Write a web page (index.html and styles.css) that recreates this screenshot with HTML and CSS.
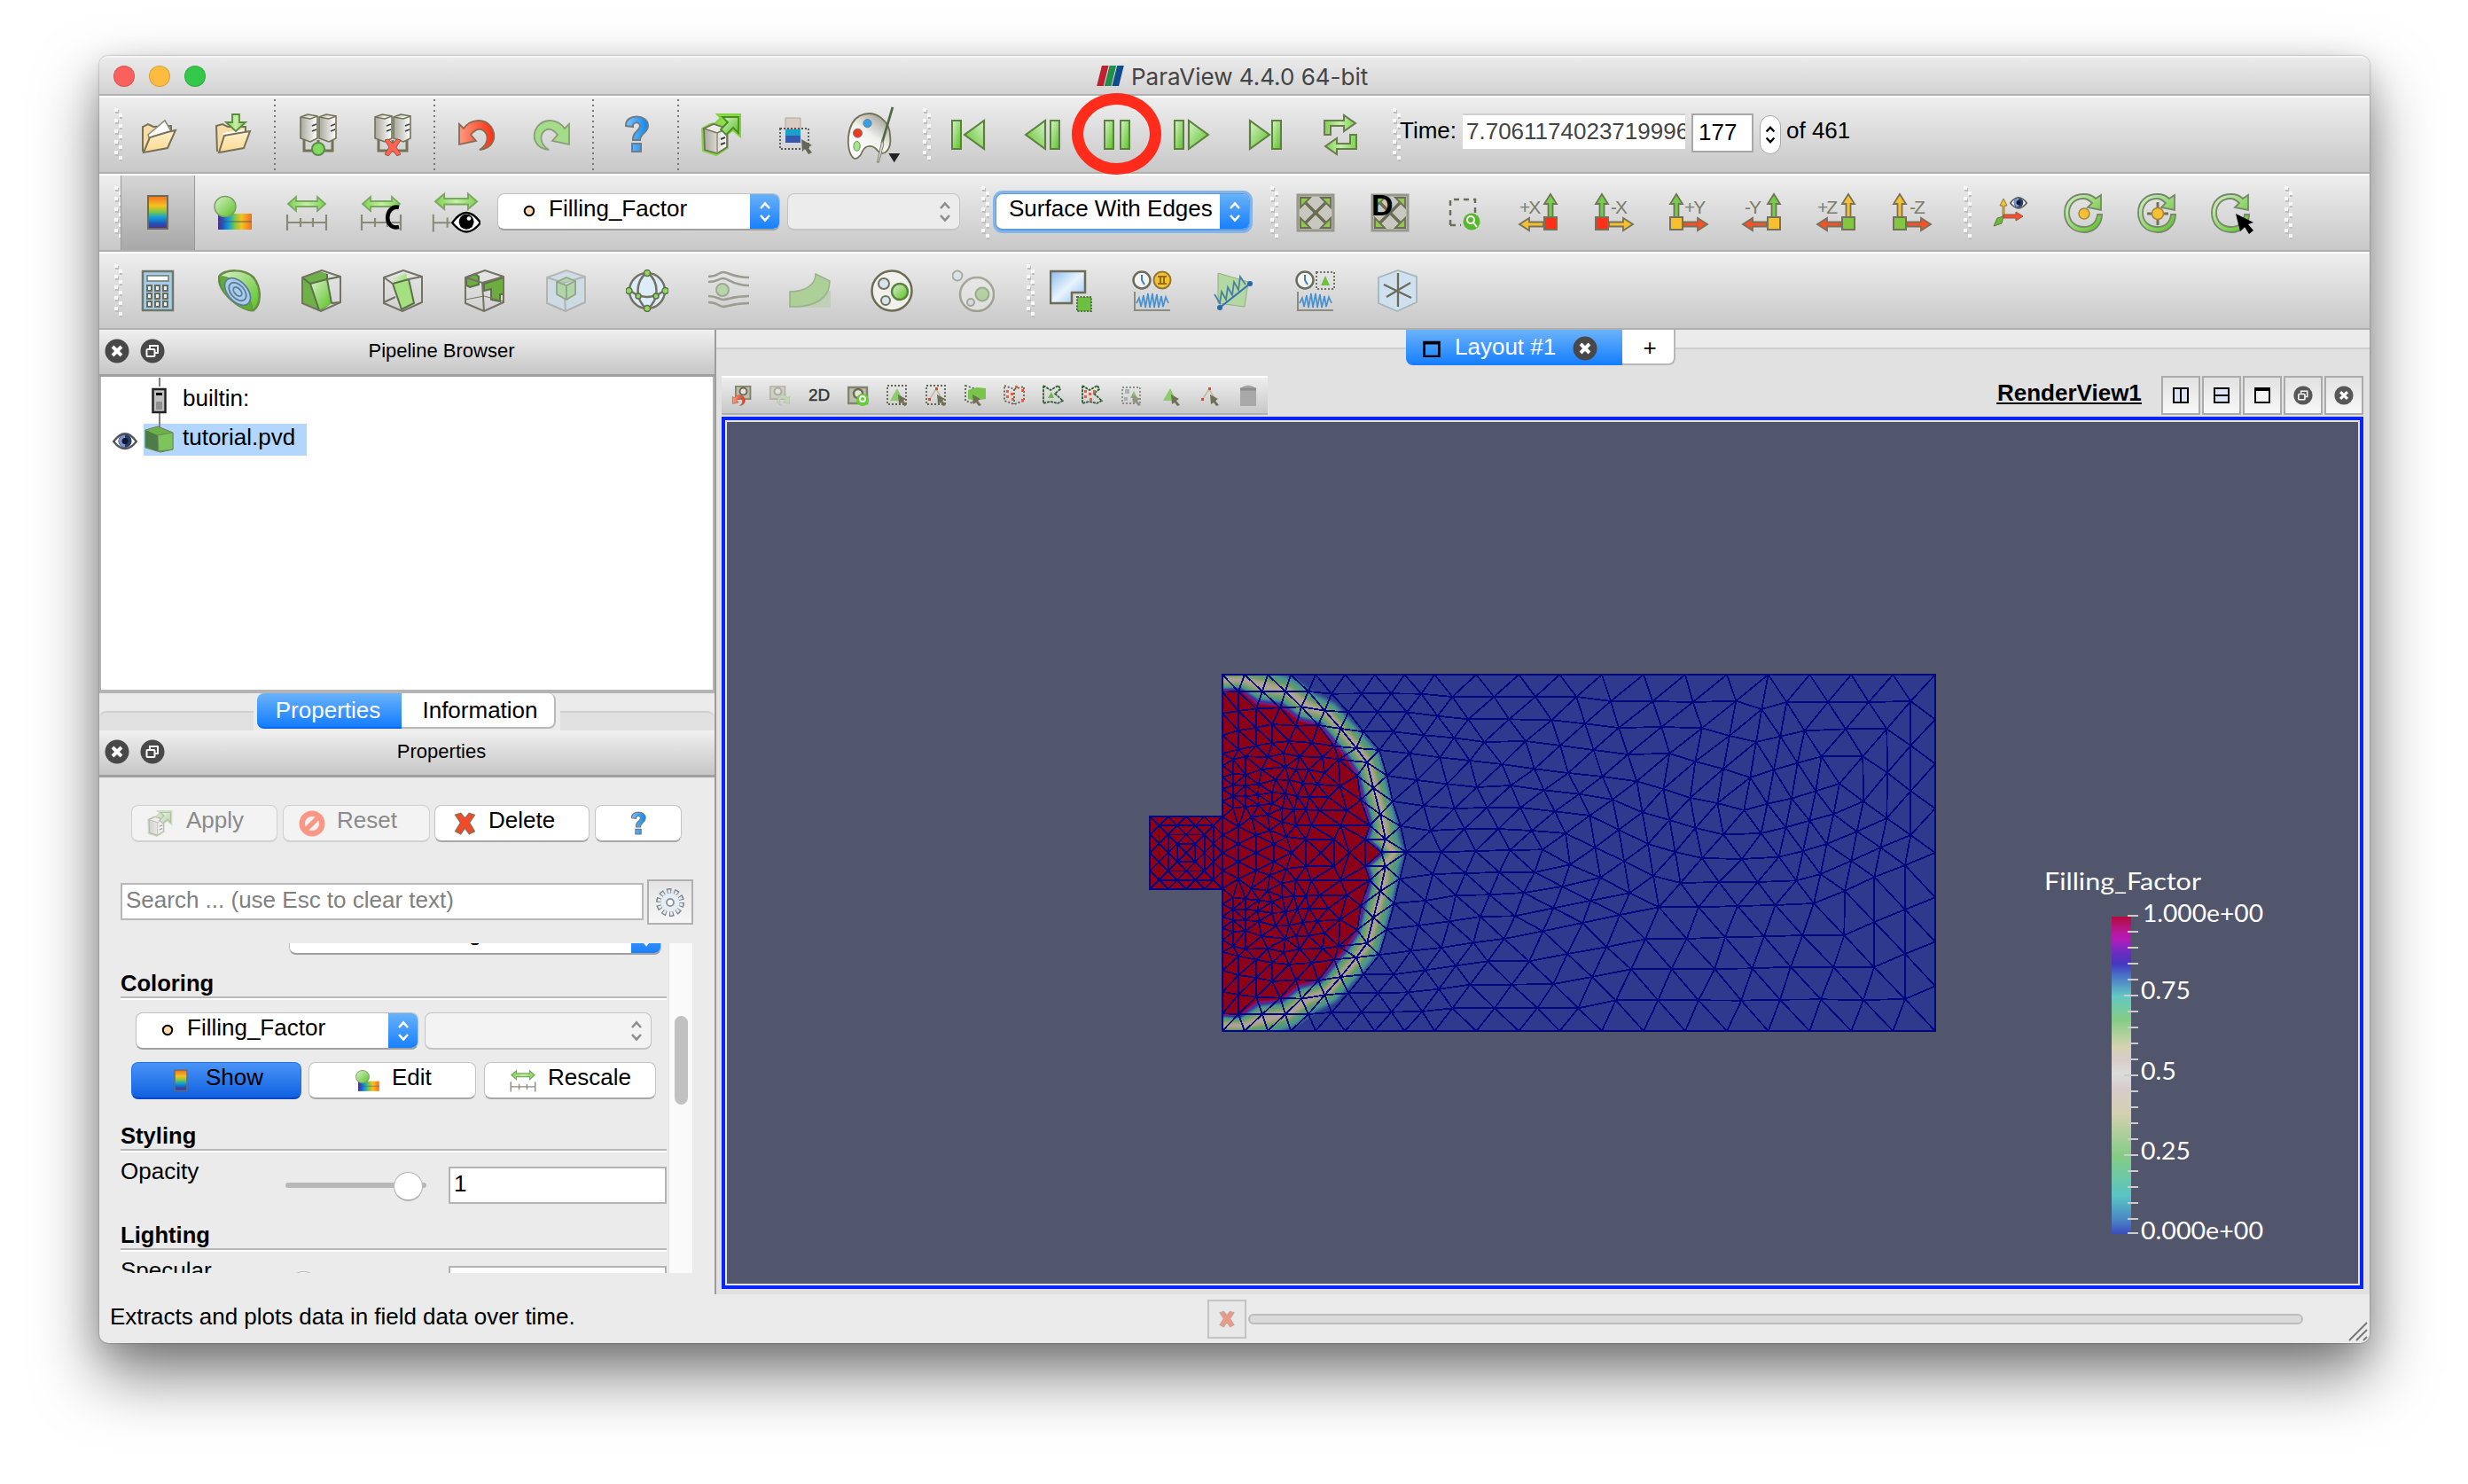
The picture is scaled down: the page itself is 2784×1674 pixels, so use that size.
FILE: index.html
```html
<!DOCTYPE html>
<html lang="en">
<head>
<meta charset="utf-8">
<title>ParaView 4.4.0 64-bit</title>
<link rel="stylesheet" href="styles.css">
</head>
<body>
<svg class="defs" width="0" height="0" aria-hidden="true">
  <defs>
    <linearGradient id="gG" x1="0" y1="0" x2="1" y2="1"><stop offset="0" stop-color="#d9f2cc"/><stop offset="1" stop-color="#58c020"/></linearGradient>
    <linearGradient id="gH" x1="0" y1="0" x2="1" y2="0"><stop offset="0" stop-color="#7cd24c"/><stop offset=".5" stop-color="#c4f0a8"/><stop offset="1" stop-color="#7cd24c"/></linearGradient>
    <linearGradient id="gY" x1="0" y1="0" x2="0" y2="1"><stop offset="0" stop-color="#fff0cc"/><stop offset="1" stop-color="#ffd890"/></linearGradient>
    <linearGradient id="gR" x1="0" y1="0" x2="1" y2="0"><stop offset="0" stop-color="#ff9a80"/><stop offset="1" stop-color="#ff2c10"/></linearGradient>
    <linearGradient id="gS" x1="0" y1="0" x2="1" y2="0"><stop offset="0" stop-color="#a8a89c"/><stop offset="1" stop-color="#fff"/></linearGradient>
    <linearGradient id="gP" x1="1" y1="0" x2=".4" y2=".9"><stop offset="0" stop-color="#8c8c80"/><stop offset=".6" stop-color="#f0f0ec"/><stop offset="1" stop-color="#fff"/></linearGradient>
    <linearGradient id="gB" x1="0" y1="0" x2="1" y2="1"><stop offset="0" stop-color="#8cbcf0"/><stop offset=".5" stop-color="#e8f4ff"/><stop offset="1" stop-color="#8cbcf0"/></linearGradient>
    <linearGradient id="gQ" x1="0" y1="0" x2="1" y2="0"><stop offset="0" stop-color="#7cc4ff"/><stop offset="1" stop-color="#0a88f0"/></linearGradient>
    <linearGradient id="rbV" x1="0" y1="0" x2="0" y2="1"><stop offset="0" stop-color="#f07020"/><stop offset=".3" stop-color="#f8c020"/><stop offset=".48" stop-color="#80c840"/><stop offset=".65" stop-color="#10a0d8"/><stop offset=".85" stop-color="#2050b8"/><stop offset="1" stop-color="#5a2890"/></linearGradient>
    <linearGradient id="rbH" x1="1" y1="0" x2="0" y2="0"><stop offset="0" stop-color="#f07020"/><stop offset=".3" stop-color="#f8c020"/><stop offset=".5" stop-color="#80c840"/><stop offset=".68" stop-color="#10a0d8"/><stop offset=".88" stop-color="#2050b8"/><stop offset="1" stop-color="#5a2890"/></linearGradient>
    <linearGradient id="legend" x1="0" y1="0" x2="0" y2="1">
      <stop offset="0" stop-color="#b40a3c"/><stop offset=".05" stop-color="#b8189c"/><stop offset=".075" stop-color="#b01cbc"/><stop offset=".115" stop-color="#6a2cc0"/><stop offset=".15" stop-color="#4438c0"/><stop offset=".185" stop-color="#4a70c8"/><stop offset=".25" stop-color="#62c8c4"/><stop offset=".325" stop-color="#84cc84"/><stop offset=".41" stop-color="#d4d4b0"/><stop offset=".45" stop-color="#d8ccc8"/><stop offset=".495" stop-color="#dcdcdc"/><stop offset=".54" stop-color="#d8cccc"/><stop offset=".62" stop-color="#d4d0b0"/><stop offset=".755" stop-color="#84cc84"/><stop offset=".88" stop-color="#58c4c4"/><stop offset=".95" stop-color="#4a8cc4"/><stop offset="1" stop-color="#3c4cc0"/>
    </linearGradient>

    <symbol id="open" viewBox="0 0 48 48"><path d="M6 43 6 15 12 12 18 15 38 14 38 24" fill="#f8dca8" stroke="#747258" stroke-width="2"/><path d="M12 24 31 8 38 20 26 32 14 30Z" fill="#fff" stroke="#8a8872" stroke-width="1.5"/><path d="M7 44 14 27 34 21 43 19 34 39Z" fill="url(#gY)" stroke="#747258" stroke-width="2"/></symbol>
    <symbol id="save" viewBox="0 0 48 48"><path d="M6 43 5 14 12 12 18 15 38 15 38 24" fill="#f8dca8" stroke="#747258" stroke-width="2"/><path d="M12 22 36 18 36 26 14 30Z" fill="#fff"/><path d="M8 44 14 25 43 20 36 39Z" fill="url(#gY)" stroke="#747258" stroke-width="2"/><path d="M23 1H31V10H38L27 20 16 10H23Z" fill="url(#gH)" stroke="#5c8a3c" stroke-width="1.8"/></symbol>
    <symbol id="servers" viewBox="0 0 48 48"><path d="M8 29V42H40V29M24 30V42" fill="none" stroke="#747258" stroke-width="3"/><g stroke="#747258" stroke-width="1.6"><path d="M4 4 12 1 23 3 23 28 15 32 4 28Z" fill="url(#gS)"/><path d="M25 4 33 1 44 3 44 28 36 32 25 28Z" fill="url(#gS)"/><path d="M4 4 15 6 23 3M25 4 36 6 44 3" fill="#f4f4f0"/><path d="M17 14 22 12M17 20 22 18M38 14 43 12M38 20 43 18" fill="none" stroke="#444"/></g></symbol>
    <symbol id="undo" viewBox="0 0 48 48"><path d="M4 12 9 17C16 7 31 4 40 15 47 26 43 39 27 41 37 35 38 24 31 19 26 16 21 19 17 24L23 31 4 35Z" fill="url(#gR)" stroke="#8a6a50" stroke-width="1.8"/></symbol>
    <symbol id="redo" viewBox="0 0 48 48"><path d="M44 12 39 17C32 7 17 4 8 15 1 26 5 39 21 41 11 35 10 24 17 19 22 16 27 19 31 24L25 31 44 35Z" fill="#a4dc88" stroke="#8c9c7c" stroke-width="1.8"/></symbol>
    <symbol id="help" viewBox="0 0 48 48"><path d="M12 14C11 0 37 0 37 14 37 22 28 22 28 30H20C19 20 28 20 28 14 28 9 19 9 20 15ZM19 34H29V43H19Z" fill="url(#gQ)" stroke="#6c7c88" stroke-width="2"/></symbol>
    <symbol id="box" viewBox="0 0 48 48"><path d="M3 17 12 12 18 11 24 5 20 1H46V26L38 19 32 23V39L19 47 4 42Z" fill="#8cdc4c" stroke="#80d43c" stroke-width="2"/><path d="M5 17 16 12 31 17V38L20 45 6 41Z" fill="url(#gS)" stroke="#747258" stroke-width="1.8"/><path d="M5 17 16 12 31 17 20 22Z" fill="#ececE6" stroke="#747258" stroke-width="1.5"/><path d="M20 22V45" fill="none" stroke="#a09080" stroke-width="1.6"/><path d="M24 29 29 27M24 35 29 33" stroke="#444" stroke-width="2"/><path d="M26 4H44V22L38 16 30 24 24 18 32 10Z" fill="url(#gG)" stroke="#4c8a28" stroke-width="1.8"/></symbol>
    <symbol id="selcolor" viewBox="0 0 48 48"><path d="M13 5H30V18H13Z" fill="#d8ccc4" stroke="#b0a8a0"/><path d="M13 18H30V33H13Z" fill="url(#rbV)"/><path d="M13 18H30V25H13Z" fill="#18a0c8"/><path d="M13 25H30V33H13Z" fill="#3858b0"/><path d="M7 17H39V40H7Z" fill="none" stroke="#555" stroke-width="1.8" stroke-dasharray="2 2"/><path d="M31 29 43 36 38 38 43 44 39 46 35 40 32 43Z" fill="#66665c"/></symbol>
    <symbol id="palette" viewBox="0 0 72 72"><path d="M12 64C3 54 4 22 20 13 40 3 58 20 58 38 60 54 50 64 43 56 37 48 28 48 24 56 22 62 16 68 12 64Z" fill="url(#gP)" stroke="#747258" stroke-width="2"/><circle cx="30" cy="22" r="5" fill="#30a0f0" stroke="#777"/><circle cx="18" cy="34" r="5.500" fill="#f03820" stroke="#777"/><ellipse cx="17" cy="50" rx="4" ry="6" fill="#a0e880" stroke="#777"/><path d="M61 2 48 46" stroke="#506a44" stroke-width="3"/><path d="M48 42 50 48 44 70 42 70Z" fill="#ddd" stroke="#747258"/><path d="M56 59H70L63 70Z" fill="#222"/></symbol>

    <g id="tri"><path d="M0 0V32L20 16Z" fill="url(#gG)" stroke="#5c8040" stroke-width="2"/></g>
    <g id="bar"><rect width="10" height="32" fill="url(#gG)" stroke="#5c8040" stroke-width="2"/></g>
    <symbol id="first" viewBox="0 0 48 48"><use href="#bar" x="6" y="8"/><use href="#tri" transform="matrix(-1.1 0 0 1 42 8)"/></symbol>
    <symbol id="prev" viewBox="0 0 48 48"><use href="#bar" x="33" y="8"/><use href="#tri" transform="matrix(-1.1 0 0 1 27 8)"/></symbol>
    <symbol id="pause" viewBox="0 0 48 48"><use href="#bar" x="10" y="8"/><use href="#bar" x="28" y="8"/></symbol>
    <symbol id="next" viewBox="0 0 48 48"><use href="#bar" x="5" y="8"/><use href="#tri" transform="matrix(1.1 0 0 1 21 8)"/></symbol>
    <symbol id="last" viewBox="0 0 48 48"><use href="#bar" x="31" y="8"/><use href="#tri" transform="matrix(1.1 0 0 1 6 8)"/></symbol>
    <symbol id="loop" viewBox="0 0 48 48"><path id="lp" d="M6 24V8H28V2L41 11 28 20V14H13V24Z" fill="url(#gH)" stroke="#6a7c50" stroke-width="2"/><use href="#lp" transform="rotate(180 24 24)"/></symbol>

    <symbol id="cbar" viewBox="0 0 48 48"><rect x="13" y="5" width="22" height="37" fill="url(#rbV)" stroke="#6c6c58" stroke-width="2"/></symbol>
    <symbol id="cedit" viewBox="0 0 48 48"><path d="M8 25H46V43H8Z" fill="url(#rbH)"/><path d="M8 34H46" stroke="#555" stroke-width="1.500" opacity=".6"/><ellipse cx="16" cy="17" rx="12" ry="11.500" fill="url(#gG)" stroke="#7c9c64" stroke-width="1.500"/></symbol>
    <g id="darrow"><path d="M2 9 11 1V6H35V1L44 9 35 17V12H11V17Z" fill="url(#gH)" stroke="#7aa860" stroke-width="1.800"/></g>
    <g id="rule"><path d="M1 0V18M45 0V18M1 9H45M16 4V14M30 4V14" stroke="#8a8a78" stroke-width="2.200" fill="none"/></g>
    <symbol id="rescale" viewBox="0 0 48 48"><use href="#darrow" x="1" y="5"/><use href="#rule" x="1" y="26"/></symbol>
    <symbol id="rescalec" viewBox="0 0 48 48"><use href="#darrow" x="1" y="5"/><use href="#rule" x="1" y="26"/><path d="M44 18C28 14 26 44 44 40" fill="none" stroke="#000" stroke-width="4.500"/></symbol>
    <symbol id="rescalev" viewBox="0 0 60 48"><use href="#darrow" transform="translate(3 0) scale(1.2 1.15)"/><path d="M3 26V47M3 36H24M20 30V42" stroke="#8a8a78" stroke-width="2.200" fill="none"/><path d="M26 36Q43 12 60 36 43 58 26 36Z" fill="#fff" stroke="#000" stroke-width="2.500"/><circle cx="43" cy="35" r="9" fill="#000"/><circle cx="46" cy="31" r="2.500" fill="#fff"/></symbol>
    <symbol id="fit" viewBox="0 0 48 48"><rect x="4" y="4" width="40" height="40" fill="#c8c8c0" stroke="#98988c" stroke-width="3"/><path d="M13 13 35 35M35 13 13 35" stroke="#6c6c54" stroke-width="3.500"/><path d="M7 7H18L7 18ZM41 7H30L41 18ZM7 41H18L7 30ZM41 41H30L41 30Z" fill="#90c850" stroke="#6c6c54" stroke-width="1.800"/></symbol>
    <symbol id="zoomsel" viewBox="0 0 48 48"><path d="M8 38V9H36V24M8 38H20" fill="none" stroke="#6c6c5c" stroke-width="2.500" stroke-dasharray="6 5"/><circle cx="32" cy="34" r="9.500" fill="#58b82c"/><circle cx="31" cy="32" r="4" fill="none" stroke="#fff" stroke-width="2"/><path d="M34 35 38 40" stroke="#fff" stroke-width="2"/></symbol>
    <path id="up" d="M-2.500 28V12H-7L0 1 7 12H2.500V28Z" stroke="#747258" stroke-width="1.800" fill="currentColor"/>
    <symbol id="rot" viewBox="0 0 52 48"><path d="M46 26C46 38 37 46 26 46 12 46 4 36 4 24 4 10 14 3 26 3 32 3 36 5 39 8L45 4V21L30 18 35 13C31 9 28 8 25 8 16 8 9 14 9 24 9 34 16 40 26 40 34 40 40 35 41 26Z" fill="url(#gG)" stroke="#78886a" stroke-width="1.800"/></symbol>
    <symbol id="eye" viewBox="0 0 48 48"><path d="M2 24Q24-6 46 24 24 52 2 24Z" fill="#fff" stroke="#555" stroke-width="4"/><circle cx="24" cy="23" r="13" fill="#28406c"/><path d="M24 11A12 12 0 0 0 24 35Z" fill="#7c98cc"/><circle cx="24" cy="23" r="6" fill="#101830"/></symbol>

    <symbol id="calc" viewBox="0 0 48 48"><rect x="7" y="2" width="34" height="44" fill="#a8ccec" stroke="#6c7868" stroke-width="2.500"/><rect x="12" y="7" width="24" height="6" fill="#fff" stroke="#6c7868" stroke-width="1.500"/><path d="M12 18h5v6h-5zM21 18h5v6h-5zM30 18h5v6h-5zM12 27h5v6h-5zM21 27h5v6h-5zM30 27h5v6h-5zM12 36h5v6h-5zM21 36h5v6h-5zM30 36h5v6h-5z" fill="#e8f0f4" stroke="#6c6c58" stroke-width="2"/></symbol>
    <symbol id="contour" viewBox="0 0 48 48"><path d="M1 8C8-1 30-1 40 9 50 22 48 40 40 46 28 48-1 26 1 8Z" fill="url(#gG)" stroke="#688c48" stroke-width="2.500"/><path d="M3 8C14 6 38 26 39 46 26 48-2 26 3 8Z" fill="#5cb030" stroke="#688c48"/><g fill="#a8ccec" stroke="#5c7c98" stroke-width="1.800"><ellipse cx="22" cy="25" rx="11" ry="18" transform="rotate(-42 22 25)"/><ellipse cx="22" cy="25" rx="7.500" ry="12" transform="rotate(-42 22 25)"/><ellipse cx="22" cy="25" rx="3.500" ry="6" transform="rotate(-42 22 25)"/></g></symbol>
    <path id="wire" d="M3 9 25 1 46 8V37L24 47 3 38ZM3 9 22 15 46 8M22 15 24 47" fill="none" stroke="#747264" stroke-width="2"/>
    <path id="hull" d="M3 9 25 1 46 8V37L24 47 3 38Z" fill="none" stroke="#747264" stroke-width="2"/>
    <symbol id="clip" viewBox="0 0 48 48"><path d="M3 9 22 2 32 5 31 11 36 38 24 47 3 38Z" fill="#70b048"/><path d="M12 16 31 12 36 38 22 45Z" fill="url(#gG)"/><path d="M3 9 12 16 22 46M12 16 31 11 36 38M31 11V5M31 11 46 8M36 38 46 37" fill="none" stroke="#5c7048" stroke-width="2"/><use href="#hull"/></symbol>
    <symbol id="slice" viewBox="0 0 48 48"><path d="M13 10 28 4 36 38 23 45Z" fill="url(#gG)"/><path d="M13 16 31 11 37 38 23 45Z" fill="#a4e080" stroke="#5c7048" stroke-width="2"/><path d="M3 9 13 16M31 11 46 8M3 37 16 31" stroke="#747264" stroke-width="2"/><use href="#hull"/></symbol>
    <symbol id="thresh" viewBox="0 0 48 48"><path d="M4 9 14 5 18 8V17L8 20 4 18ZM24 16 46 9V28H42V36L32 34V22L24 24Z" fill="#6cac40" stroke="#5c7048" stroke-width="2"/><use href="#wire"/><path d="M3 34 24 30 46 36" fill="none" stroke="#747264"/></symbol>
    <symbol id="subset" viewBox="0 0 48 48"><g opacity=".8"><path d="M3 9 25 1 46 8V37L24 47 3 38Z" fill="#ccdce8"/><g opacity=".45"><use href="#wire"/></g><path d="M14 14 25 9 35 13V28L25 34 14 28ZM14 14 25 18 35 13M25 18V34" fill="#a8d49c" stroke="#7c9870" stroke-width="1.800"/></g></symbol>
    <symbol id="glyph" viewBox="0 0 48 48"><circle cx="24" cy="24" r="20" fill="#dcecf8" stroke="#747264" stroke-width="2.500"/><path d="M24 3C10 14 10 34 24 45 38 34 38 14 24 3M5 24Q24 38 43 24" fill="none" stroke="#747264" stroke-width="2.500"/><g fill="#90d860" stroke="#5c7048" stroke-width="1.500"><circle cx="24" cy="4" r="3.500"/><circle cx="24" cy="44" r="3.500"/><circle cx="3.500" cy="24" r="3.500"/><circle cx="44.500" cy="24" r="3.500"/><circle cx="14" cy="30" r="3"/><circle cx="34" cy="30" r="3"/></g></symbol>
    <symbol id="stream" viewBox="0 0 48 48"><g fill="none" stroke="#9c9c90" stroke-width="2.500"><path d="M1 8C12 8 12 3 18 3S28 9 47 9"/><path d="M1 14C12 14 12 10 18 10S28 18 47 18"/><path d="M1 30C12 30 12 34 18 34S28 30 47 30"/><path d="M1 37C12 37 12 42 18 42S28 38 47 38"/></g><circle cx="17" cy="23" r="7" fill="#b8d4ac" stroke="#9cac90" stroke-width="2"/></symbol>
    <symbol id="warp" viewBox="0 0 48 48"><path d="M1 24H47V43H1Z" fill="#c0cfb8"/><path d="M1 25C20 25 30 16 30 5L46 13C46 32 30 43 1 42Z" fill="#acd098" stroke="#9cb08c" stroke-width="1.500"/></symbol>
    <symbol id="group" viewBox="0 0 48 48"><circle cx="24" cy="24" r="22.500" fill="#f0f0ec" stroke="#6c6c54" stroke-width="2.500"/><circle cx="15" cy="16" r="6" fill="#d4e4f0" stroke="#747258" stroke-width="2"/><circle cx="33" cy="25" r="9" fill="url(#gG)" stroke="#5c8040" stroke-width="2.500"/><circle cx="17" cy="35" r="5" fill="#d4e4f0" stroke="#747258" stroke-width="2"/></symbol>
    <symbol id="extract" viewBox="0 0 48 48"><g opacity=".5"><circle cx="28" cy="28" r="19" fill="#ececea" stroke="#6c6c54" stroke-width="2.500"/><circle cx="6" cy="7" r="5.500" fill="#d4e4f0" stroke="#747258" stroke-width="2"/><circle cx="34" cy="28" r="7.500" fill="#90c870" stroke="#5c8040" stroke-width="2"/><circle cx="21" cy="37" r="4" fill="#d4e4f0" stroke="#747258" stroke-width="2"/></g></symbol>
    <symbol id="blocks" viewBox="0 0 48 48"><path d="M1 2H40V26H25V38H1Z" fill="url(#gB)" stroke="#6c6c58" stroke-width="2.500"/><rect x="31" y="31" width="16" height="16" fill="#6cc040" stroke="#506c40" stroke-width="2" stroke-dasharray="2 1.500"/></symbol>
    <g id="clock"><circle cx="12" cy="12" r="9.500" fill="#f4f4f0" stroke="#6c6c5c" stroke-width="2.500"/><path d="M12 6V12L15 17" fill="none" stroke="#3880c8" stroke-width="2"/></g>
    <g id="wave"><path d="M4 25V46H44" fill="none" stroke="#8c8c80" stroke-width="2"/><path d="M6 38 9 32 11 42 14 29 16 43 19 27 21 43 24 27 26 43 29 28 31 43 34 30 36 42 39 31 42 38" fill="none" stroke="#4890d0" stroke-width="1.700"/></g>
    <symbol id="tplot" viewBox="0 0 48 48"><use href="#clock"/><circle cx="35" cy="12" r="9.500" fill="#f8c030" stroke="#8c7830" stroke-width="2"/><path d="M30 8H40M30 16H40M33 8V16M37 8V16" stroke="#8c7020" stroke-width="2"/><use href="#wave"/></symbol>
    <symbol id="lplot" viewBox="0 0 48 48"><path d="M6 4 40 14 36 42 6 38Z" fill="#b4d8a4" stroke="#90b080"/><path d="M2 28 8 38 10 25 15 34 17 20 22 29 24 14 29 23 31 8 37 17" fill="none" stroke="#4c80a0" stroke-width="1.800"/><path d="M8 43 42 16" stroke="#3070b0" stroke-width="2"/><circle cx="8" cy="43" r="3" fill="#2868b0"/><circle cx="42" cy="16" r="3" fill="#2868b0"/></symbol>
    <symbol id="splot" viewBox="0 0 48 48"><use href="#clock"/><rect x="25" y="3" width="20" height="19" fill="none" stroke="#747264" stroke-width="2" stroke-dasharray="2 2"/><path d="M35 7 40 18H30Z" fill="#70c040"/><use href="#wave"/></symbol>
    <symbol id="probe" viewBox="0 0 48 48"><path d="M3 9 25 1 46 8V37L24 47 3 38Z" fill="#cfe0ee" stroke="#a8b4bc" stroke-width="1.800"/><path d="M25 4V42M9 17 40 32M39 15 12 31" stroke="#6c6c5c" stroke-width="2.300"/></symbol>

    <symbol id="x" viewBox="0 0 28 28"><circle cx="14" cy="14" r="13.500" fill="#484848"/><path d="M9 9 19 19M19 9 9 19" stroke="#fff" stroke-width="4"/></symbol>
    <symbol id="float" viewBox="0 0 28 28"><circle cx="14" cy="14" r="13.500" fill="#484848"/><path d="M11 11V8H20V16H17" fill="none" stroke="#fff" stroke-width="2"/><rect x="7.500" y="12" width="9" height="8" rx="1" fill="none" stroke="#fff" stroke-width="2"/></symbol>
    <symbol id="redx" viewBox="0 0 28 28"><path d="M3 4 9 2 14 8 19 2 25 4 19 13 25 23 19 26 14 19 9 26 3 23 9 13Z" fill="#f84828" stroke="#a06850" stroke-width="1.800"/></symbol>
    <symbol id="ud" viewBox="0 0 16 24"><path d="M3 8 8 2.500 13 8M3 16 8 21.500 13 16" fill="none" stroke="currentColor" stroke-width="2.600"/></symbol>
    <symbol id="pt" viewBox="0 0 16 16"><circle cx="8" cy="8" r="5.200" fill="#ffd8ac" stroke="#000" stroke-width="2"/></symbol>
    <symbol id="cam" viewBox="0 0 24 24"><path d="M1 3H22V21H1Z" fill="#bcbcb0" stroke="#84846c" stroke-width="2.500"/><circle cx="12" cy="10" r="5" fill="#e4e4dc" stroke="#6c6c54" stroke-width="2.500"/></symbol>
    <symbol id="cur" viewBox="0 0 24 24"><path d="M13 11 22 16 19 18 23 23 20 24 17 20 14 22Z" fill="#707054"/></symbol>
    <symbol id="tric" viewBox="0 0 24 24"><path d="M12 4 19 18H4Z" fill="#8ccc6c"/></symbol>
    <symbol id="trip" viewBox="0 0 24 24"><path d="M12 5 19 17M12 5 4 17" stroke="#c4b8a0" stroke-width="1.500"/><path d="M11 3h3v3h-3zM3 15h3v3h-3zM17 15h3v3h-3z" fill="#f84020"/></symbol>
  </defs>
</svg>

<div class="window">
  <header class="titlebar">
    <div class="lights"><i class="light red"></i><i class="light amber"></i><i class="light green"></i></div>
    <svg class="logo" viewBox="0 0 32 24"><path d="M6 0H14L8 24H0Z" fill="#c02030"/><path d="M15 0H23L17 24H9Z" fill="#209048"/><path d="M24 0H32L26 24H18Z" fill="#104c90"/></svg>
    <span>ParaView 4.4.0 64-bit</span>
  </header>

  <div class="toolbar main">
    <i class="grip"></i>
    <button class="tool"><svg><use href="#open"/></svg></button>
    <button class="tool"><svg><use href="#save"/></svg></button>
    <i class="sep"></i>
    <button class="tool"><svg viewBox="0 0 48 48"><use href="#servers"/><circle cx="24" cy="40" r="7" fill="#80dc60" stroke="#5c8a48" stroke-width="2"/></svg></button>
    <button class="tool"><svg viewBox="0 0 48 48"><use href="#servers"/><path d="M15 30 19 29 24 34 29 29 33 30 28 38 33 46 29 48 24 42 19 48 15 46 20 38Z" fill="#ff6450" stroke="#a05040"/></svg></button>
    <i class="sep"></i>
    <button class="tool"><svg><use href="#undo"/></svg></button>
    <button class="tool"><svg><use href="#redo"/></svg></button>
    <i class="sep"></i>
    <button class="tool"><svg><use href="#help"/></svg></button>
    <i class="sep"></i>
    <button class="tool"><svg><use href="#box"/></svg></button>
    <button class="tool"><svg><use href="#selcolor"/></svg></button>
    <button class="tool"><svg class="big"><use href="#palette"/></svg></button>
    <i class="grip vcr-grip"></i>
    <button class="tool"><svg><use href="#first"/></svg></button>
    <button class="tool"><svg><use href="#prev"/></svg></button>
    <button class="tool marked"><svg><use href="#pause"/></svg><i class="ring"></i></button>
    <button class="tool"><svg><use href="#next"/></svg></button>
    <button class="tool"><svg><use href="#last"/></svg></button>
    <button class="tool"><svg><use href="#loop"/></svg></button>
    <i class="grip time-grip"></i>
    <label class="time-label">Time:</label>
    <div class="time-value">7.7061174023719996</div>
    <div class="time-step">177</div>
    <div class="stepper"><svg><use href="#ud"/></svg></div>
    <span class="time-total">of 461</span>
  </div>

  <div class="toolbar color">
    <i class="grip"></i>
    <button class="tool pressed"><svg><use href="#cbar"/></svg></button>
    <button class="tool"><svg><use href="#cedit"/></svg></button>
    <button class="tool"><svg><use href="#rescale"/></svg></button>
    <button class="tool"><svg><use href="#rescalec"/></svg></button>
    <button class="tool"><svg class="wide"><use href="#rescalev"/></svg></button>
    <div class="combo array"><svg class="pt"><use href="#pt"/></svg><span>Filling_Factor</span><i class="cap"><svg><use href="#ud"/></svg></i></div>
    <div class="combo off component"><i class="cap"><svg><use href="#ud"/></svg></i></div>
    <i class="grip rep-grip"></i>
    <div class="combo focus rep"><span>Surface With Edges</span><i class="cap"><svg><use href="#ud"/></svg></i></div>
    <i class="grip cam-grip"></i>
    <button class="tool"><svg><use href="#fit"/></svg></button>
    <button class="tool"><svg viewBox="0 0 48 48"><use href="#fit"/><text x="3" y="27" class="glyph-d">D</text></svg></button>
    <button class="tool"><svg><use href="#zoomsel"/></svg></button>
    <button class="tool"><svg viewBox="0 0 48 48" class="axis"><text x="2" y="25">+X</text><use href="#up" x="37" y="2" color="#70d048"/><use href="#up" transform="translate(1 37) rotate(-90)" color="#f8c030"/><rect x="30" y="29" width="14" height="14" fill="#ff3018"/></svg></button>
    <button class="tool"><svg viewBox="0 0 48 48" class="axis"><text x="21" y="25">-X</text><use href="#up" x="11" y="2" color="#70d048"/><use href="#up" transform="translate(47 37) rotate(90)" color="#f8c030"/><rect x="4" y="29" width="14" height="14" fill="#ff3018"/></svg></button>
    <button class="tool"><svg viewBox="0 0 48 48" class="axis"><text x="20" y="25">+Y</text><use href="#up" x="11" y="2" color="#70d048"/><use href="#up" transform="translate(47 37) rotate(90)" color="#f85028"/><rect x="4" y="29" width="14" height="14" fill="#f8c030"/></svg></button>
    <button class="tool"><svg viewBox="0 0 48 48" class="axis"><text x="4" y="25">-Y</text><use href="#up" x="37" y="2" color="#70d048"/><use href="#up" transform="translate(1 37) rotate(-90)" color="#f85028"/><rect x="30" y="29" width="14" height="14" fill="#f8c030"/></svg></button>
    <button class="tool"><svg viewBox="0 0 48 48" class="axis"><text x="2" y="25">+Z</text><use href="#up" x="37" y="2" color="#f8c030"/><use href="#up" transform="translate(1 37) rotate(-90)" color="#f85028"/><rect x="30" y="29" width="14" height="14" fill="#80c840"/></svg></button>
    <button class="tool"><svg viewBox="0 0 48 48" class="axis"><text x="22" y="25">-Z</text><use href="#up" x="11" y="2" color="#f8c030"/><use href="#up" transform="translate(47 37) rotate(90)" color="#f85028"/><rect x="4" y="29" width="14" height="14" fill="#80c840"/></svg></button>
    <i class="grip axes-grip"></i>
    <button class="tool slim"><svg viewBox="0 0 48 48"><path d="M15 28V16H12L16 8 20 16H17V28Z" fill="#f8c030" stroke="#8a7840"/><path d="M16 26H30V23L38 28 30 33V30H16Z" fill="#f85028" stroke="#8a5840"/><path d="M16 28 9 30 5 39 14 36Z" fill="#6cb83c" stroke="#5c7c40"/><use href="#eye" x="23" y="3" width="20" height="20"/></svg></button>
    <button class="tool slim"><svg viewBox="0 0 52 48" class="wide"><use href="#rot"/><circle cx="26" cy="25" r="6" fill="#f8c030" stroke="#a08840" stroke-width="1.500"/></svg></button>
    <button class="tool slim"><svg viewBox="0 0 52 48" class="wide"><use href="#rot"/><path d="M26 12V38M14 25H38" stroke="#747258" stroke-width="3"/><circle cx="26" cy="25" r="6.500" fill="#f8c030" stroke="#a08840" stroke-width="1.500"/></svg></button>
    <button class="tool slim"><svg viewBox="0 0 52 48" class="wide"><use href="#rot"/><path d="M31 25 51 35 45 37 51 44 46 48 41 40 36 45Z" fill="#000"/></svg></button>
    <i class="grip end-grip"></i>
  </div>

  <div class="toolbar filters">
    <i class="grip"></i>
    <button class="tool"><svg><use href="#calc"/></svg></button>
    <button class="tool"><svg><use href="#contour"/></svg></button>
    <button class="tool"><svg><use href="#clip"/></svg></button>
    <button class="tool"><svg><use href="#slice"/></svg></button>
    <button class="tool"><svg><use href="#thresh"/></svg></button>
    <button class="tool"><svg><use href="#subset"/></svg></button>
    <button class="tool"><svg><use href="#glyph"/></svg></button>
    <button class="tool"><svg><use href="#stream"/></svg></button>
    <button class="tool"><svg><use href="#warp"/></svg></button>
    <button class="tool"><svg><use href="#group"/></svg></button>
    <button class="tool"><svg><use href="#extract"/></svg></button>
    <i class="grip plot-grip"></i>
    <button class="tool"><svg><use href="#blocks"/></svg></button>
    <button class="tool"><svg><use href="#tplot"/></svg></button>
    <button class="tool"><svg><use href="#lplot"/></svg></button>
    <button class="tool"><svg><use href="#splot"/></svg></button>
    <button class="tool"><svg><use href="#probe"/></svg></button>
  </div>

  <div class="body">
    <aside class="docks">
      <div class="dock-title"><svg><use href="#x"/></svg><svg><use href="#float"/></svg><span>Pipeline Browser</span></div>
      <div class="tree">
        <div class="tree-row"><svg class="server" viewBox="0 0 24 44"><path d="M12 0V10M12 44V40" stroke="#808080" stroke-width="2"/><rect x="4.500" y="13" width="14" height="26" fill="#c0c0c0" stroke="#222" stroke-width="2.500"/><path d="M8 17H15V20H8Z" fill="#000"/><path d="M8 27H15V36H8Z" fill="#909090"/></svg><span>builtin:</span></div>
        <div class="tree-row second"><svg class="eye"><use href="#eye"/></svg><div class="selected"><svg viewBox="0 0 34 36"><path d="M18-8V4" stroke="#808080" stroke-width="2"/><path d="M2 7 16 3 33 10V29L19 32 2 27Z" fill="#6cb04c" stroke="#6c7c54"/><path d="M2 7 16 13V31L2 26Z" fill="#4c7c48"/><path d="M16 13 33 10V29L17 31Z" fill="#7cc45c" stroke="#6c8c54"/></svg><span>tutorial.pvd</span></div></div>
      </div>
      <div class="dock-tabs"><i class="frame"></i><div class="tabs"><span class="tab on">Properties</span><span class="tab">Information</span></div><i class="frame right"></i></div>
      <div class="dock-title"><svg><use href="#x"/></svg><svg><use href="#float"/></svg><span>Properties</span></div>

      <div class="actions">
        <button class="push off apply"><svg><use href="#box"/></svg>Apply</button>
        <button class="push off reset"><svg viewBox="0 0 28 28"><circle cx="14" cy="14" r="10.500" fill="none" stroke="#ff3c1c" stroke-width="6"/><path d="M21 7 7 21" stroke="#ff3c1c" stroke-width="5"/></svg>Reset</button>
        <button class="push delete"><svg><use href="#redx"/></svg>Delete</button>
        <button class="push about"><svg><use href="#help"/></svg></button>
      </div>
      <div class="search-row">
        <div class="search">Search ... (use Esc to clear text)</div>
        <button class="gear"><svg viewBox="0 0 34 34"><circle cx="17" cy="17" r="13" fill="none" stroke="#7c848c" stroke-width="6" stroke-dasharray="5 3.170"/><circle cx="17" cy="17" r="12.500" fill="none" stroke="#e4ecf4" stroke-width="4" stroke-dasharray="2.800 5.054" stroke-dashoffset="-1"/><circle cx="17" cy="17" r="10.500" fill="#e4ecf4" /><circle cx="17" cy="17" r="4" fill="#fff" stroke="#8c949c" stroke-width="1.800"/></svg></button>
      </div>
      <div class="scroll">
        <div class="props">
          <div class="combo rep2"><span>Surface With Edges</span><i class="cap"><svg><use href="#ud"/></svg></i></div>
          <h3 class="first">Coloring</h3>
          <div class="row combos"><div class="combo array"><svg class="pt"><use href="#pt"/></svg><span>Filling_Factor</span><i class="cap"><svg><use href="#ud"/></svg></i></div><div class="combo off component"><i class="cap"><svg><use href="#ud"/></svg></i></div></div>
          <div class="row color-buttons">
            <button class="push primary show"><svg><use href="#cbar"/></svg>Show</button>
            <button class="push edit"><svg><use href="#cedit"/></svg>Edit</button>
            <button class="push rescale"><svg><use href="#rescale"/></svg>Rescale</button>
          </div>
          <h3 class="styling">Styling</h3>
          <div class="field"><label>Opacity</label><div class="slider full"><i></i></div><div class="input">1</div></div>
          <h3 class="lighting">Lighting</h3>
          <div class="field"><label>Specular</label><div class="slider zero"><i></i></div><div class="input">0</div></div>
        </div>
        <div class="scrollbar"><i></i></div>
      </div>
    </aside>

    <main class="views">
      <div class="layout-tabs"><div class="tabs"><span class="tab on"><svg class="win" viewBox="0 0 18 18"><path d="M1 2H17V17H1ZM1 3H17" fill="none" stroke="#000" stroke-width="2.500"/></svg>Layout #1<svg class="close"><use href="#x"/></svg></span><span class="tab plus">+</span></div></div>
      <div class="view-head">
        <div class="view-tools">
          <svg viewBox="0 0 24 24"><use href="#cam" x="5" y="-1" width="19" height="20"/><use href="#undo" y="9" width="19" height="17"/></svg>
          <svg viewBox="0 0 24 24" class="dim"><use href="#cam" y="-1" width="19" height="20"/><use href="#redo" x="6" y="9" width="19" height="17"/></svg>
          <span>2D</span>
          <svg viewBox="0 0 24 24"><use href="#cam"/><circle cx="17" cy="17" r="7" fill="#64cc34"/><circle cx="17" cy="16" r="3" fill="none" stroke="#fff" stroke-width="1.800"/></svg>
          <svg viewBox="0 0 24 24"><rect x="1" y="1" width="21" height="21" class="dash"/><use href="#tric"/><use href="#cur"/></svg>
          <svg viewBox="0 0 24 24"><rect x="1" y="1" width="21" height="21" class="dash"/><use href="#trip"/><use href="#cur"/></svg>
          <svg viewBox="0 0 24 24"><path d="M1 1 10 4V21L1 18Z" class="dash"/><path d="M4 6 14 3 24 4V16L12 18 4 16Z" fill="#78c44c"/><use href="#cur" x="-4"/></svg>
          <svg viewBox="0 0 24 24"><path d="M1 1 12 5 23 2V18L12 22 1 18ZM12 5V22" class="dash"/><path d="M3 6h3v3H3zM8 9h3v3H8zM3 12h3v3H3zM9 15h3v3H9zM13 1h3v3h-3zM20 16h3v3h-3zM20 5h3v3h-3z" fill="#f85838"/></svg>
          <svg viewBox="0 0 24 24"><path d="M1 1 9 6 18 1 20 5 14 10 23 18 17 21 9 19 1 21Z" class="poly"/><path d="M10 8 13 15H6Z" fill="#68b84c"/></svg>
          <svg viewBox="0 0 24 24"><path d="M1 1 9 6 18 1 20 5 14 10 23 18 17 21 9 19 1 21Z" class="poly"/><path d="M3 6h3v3H3zM8 9h3v3H8zM3 12h3v3H3zM9 15h3v3H9zM13 6h3v3h-3z" fill="#f85838"/></svg>
          <svg viewBox="0 0 24 24" class="faint"><rect x="2" y="3" width="20" height="18" class="dash"/><path d="M5 5H10V10H5ZM4 14H8V18H4Z" fill="#8c9ca4"/><path d="M15 7 19 15H11Z" fill="#64b040"/><use href="#cur"/></svg>
          <svg viewBox="0 0 24 24"><use href="#tric"/><use href="#cur"/></svg>
          <svg viewBox="0 0 24 24"><use href="#trip"/><use href="#cur"/></svg>
          <svg viewBox="0 0 24 24"><path d="M3 4Q12-3 21 4V24H3Z" fill="#a8a8a8"/><path d="M3 5H21" stroke="#8c8c8c" stroke-width="3"/></svg>
        </div>
        <div class="view-right">
          <span class="view-name">RenderView1</span>
          <button><svg viewBox="0 0 18 18"><path d="M1 1H17V17H1ZM9 1V17" fill="#dce4f8" stroke="#000" stroke-width="2"/></svg></button>
          <button><svg viewBox="0 0 18 18"><path d="M1 1H17V17H1ZM1 9H17" fill="#dce4f8" stroke="#000" stroke-width="2"/></svg></button>
          <button><svg viewBox="0 0 18 18"><path d="M1 1H17V17H1Z" fill="#f4f4f4" stroke="#000" stroke-width="2"/><path d="M0 0H18V4H0Z"/></svg></button>
          <button><svg class="round"><use href="#float"/></svg></button>
          <button><svg class="round"><use href="#x"/></svg></button>
        </div>
      </div>
      <div class="viewport">
        <svg viewBox="0 0 1840 972" class="scene">
          <g id="mesh" transform="translate(450 264) scale(.333333)"></g>
          <g id="ticks" class="ticks"><rect x="1562" y="558" width="22" height="358" fill="url(#legend)"/></g>
          <g class="legend">
            <text x="1486" y="528" textLength="177" lengthAdjust="spacingAndGlyphs">Filling_Factor</text>
            <text x="1597" y="564" textLength="136" lengthAdjust="spacingAndGlyphs">1.000e+00</text>
            <text x="1595" y="651" textLength="56" lengthAdjust="spacingAndGlyphs">0.75</text>
            <text x="1595" y="742" textLength="40" lengthAdjust="spacingAndGlyphs">0.5</text>
            <text x="1595" y="832" textLength="56" lengthAdjust="spacingAndGlyphs">0.25</text>
            <text x="1595" y="922" textLength="138" lengthAdjust="spacingAndGlyphs">0.000e+00</text>
          </g>
        </svg>
      </div>
    </main>
  </div>

  <footer class="status">
    <span>Extracts and plots data in field data over time.</span>
    <button class="cancel"><svg><use href="#redx"/></svg></button>
    <div class="progress"></div>
    <svg class="resize" viewBox="0 0 22 22"><path d="M1 21 21 1M9 21 21 9M17 21 21 17" stroke="#777" stroke-width="2"/></svg>
  </footer>
</div>
<script src="mesh.js"></script>
</body>
</html>
```
FILE: styles.css
```css
* { box-sizing: border-box; }
body { margin: 0; padding: 63px 0 0 112px; width: 2784px; height: 1674px; overflow: hidden; background: #fff; font: 26px/30px "Liberation Sans", Arial, sans-serif; color: #000; }
button { font: inherit; color: inherit; margin: 0; padding: 0; border: 0; background: none; }
svg { display: block; flex: none; }
i { display: block; flex: none; font-style: normal; }
.defs { position: absolute; }
.window { width: 2561px; height: 1452px; border-radius: 10px; background: #ebebeb; display: flex; flex-direction: column; box-shadow: 0 0 2px rgba(0,0,0,.45), 0 36px 72px rgba(0,0,0,.5), 0 10px 34px rgba(0,0,0,.14); }

.titlebar { height: 45px; flex: none; display: flex; align-items: center; border-radius: 10px 10px 0 0; border-top: 2px solid #f6f6f6; border-bottom: 2px solid #b0b0b0; background: linear-gradient(#ebebeb, #d3d3d3); color: #444; font: 26px/30px Inter, sans-serif; }
.titlebar span { padding-top: 2px; }
.lights { display: flex; gap: 16px; margin-left: 16px; width: 1109px; }
.light { width: 24px; height: 24px; border-radius: 50%; border: 1px solid rgba(0,0,0,.15); }
.red { background: #fc605c; }
.amber { background: #fdbc40; }
.green { background: #34c84a; }
.logo { width: 31px; height: 23px; margin-right: 8px; }

.toolbar { height: 88px; flex: none; display: flex; align-items: center; border-top: 2px solid #fff; border-bottom: 2px solid #b0b0b0; background: linear-gradient(#eee, #c8c8c8); }
.grip { width: 9px; height: 60px; margin-left: 17px; background: conic-gradient(from 0deg at 4px 4px, transparent 270deg, #f8f8f8 0) 0 0/10px 12px, conic-gradient(from 0deg at 4px 4px, transparent 270deg, #bebebe 0) 1px 2px/10px 12px, conic-gradient(from 0deg at 4px 4px, transparent 270deg, #f8f8f8 0) 5px 6px/10px 12px, conic-gradient(from 0deg at 4px 4px, transparent 270deg, #bebebe 0) 6px 8px/10px 12px; }
.main > .grip:first-child { margin-right: -1px; }
.color > .grip:first-child { margin-right: -2px; }
.filters > .grip:first-child { margin-right: -6px; }
.tool { width: 84px; height: 84px; flex: none; display: flex; align-items: center; justify-content: center; }
.tool svg { width: 48px; height: 48px; }
.tool svg.big { width: 66px; height: 66px; margin-left: 6px; }
.tool svg.wide { width: 56px; height: 48px; }
.tool.slim { width: 83px; }
.filters .tool { width: 92px; }
.pressed { background: linear-gradient(#d6d6d6, #a8a8a8); border: solid #999; border-width: 0 1px; }
.sep { width: 11.5px; height: 80px; background: repeating-linear-gradient(#777 0 2px, transparent 2px 6px) 4px 0/2px 100% no-repeat; }
.vcr-grip { margin-left: 18px; }
.time-grip { margin-left: 17px; margin-right: -1px; }
.marked { position: relative; }
.ring { position: absolute; left: -9px; top: -5px; width: 101px; height: 92px; border: 13px solid #ff2c1c; border-radius: 50%; }
.time-label { width: 69px; margin-top: -10px; flex: none; }
.time-value { width: 251px; height: 40px; flex: none; margin: -8px 0 0 2px; padding-left: 4px; line-height: 36px; overflow: hidden; background: #fff; border-top: 2px solid #d0d0d0; color: #444; }
.time-step { width: 70px; height: 44px; flex: none; margin: -4px 7px 0 7px; padding-left: 6px; line-height: 38px; background: #fff; border: 2px solid #a8a8a8; }
.stepper { width: 24px; height: 44px; flex: none; border-radius: 12px; background: #fff; border: 1px solid #a8a8a8; display: flex; align-items: center; justify-content: center; margin-right: 6px; }
.stepper svg { width: 14px; height: 26px; }
.time-total { margin-top: -10px; }

.combo { height: 42px; flex: none; display: flex; background: #fff; border: 1px solid #c0c0c0; border-bottom: 2px solid #a0a0a0; border-radius: 8px; overflow: hidden; margin-top: -2px; }
.combo span { line-height: 33px; flex: 1; white-space: nowrap; }
.combo .cap { width: 34px; margin: -1px -1px -2px auto; background: linear-gradient(#6ab3f9, #147dff); color: #fff; display: flex; align-items: center; justify-content: center; }
.combo .cap svg { width: 18px; height: 24px; }
.combo .pt { width: 16px; height: 16px; margin: 11px 14px 0 27px; }
.combo.off { background: #ececec; border-color: #c4c4c4; }
.combo.off .cap { background: none; color: #8c8c8c; }
.combo.array { width: 319px; }
.color .array { margin-left: 5px; }
.color .component { width: 195px; margin-left: 8px; }
.rep-grip { margin-left: 24px; }
.rep { width: 287px; margin-left: 7px; padding-left: 14px; }
.focus { border-color: #5c9ce0; box-shadow: 0 0 0 3px #84b4e8; }
.cam-grip { margin-left: 23px; }
.axes-grip { margin-right: 2px; }
.end-grip { margin-left: 19px; }
.plot-grip { margin-left: 14px; margin-right: -5px; }
.glyph-d { font: bold 34px "Liberation Sans", sans-serif; }
.axis text { font: 21px "Liberation Sans", sans-serif; letter-spacing: -2px; fill: #7c7c68; }
.axis rect { stroke: #747258; stroke-width: 2; }

.body { height: 1088px; flex: none; display: flex; }
.docks { width: 696px; border-right: 2px solid #9c9c9c; display: flex; flex-direction: column; }
.dock-title { height: 53px; flex: none; display: flex; align-items: center; padding: 0 0 2px 6px; gap: 12px; border-bottom: 3px solid #a0a0a0; background: linear-gradient(#f0f0f0, #c6c6c6); font-size: 22px; }
.dock-title svg { width: 28px; height: 28px; }
.dock-title span { flex: 1; text-align: center; margin-right: 8px; }
.tree { height: 357px; flex: none; background: #fff; border: solid #b4b4b4; border-width: 0 2px 4px; padding-top: 1px; }
.tree-row { height: 44px; display: flex; align-items: center; }
.tree-row .server { width: 24px; height: 44px; margin: 0 14px 0 54px; }
.tree-row span { padding-top: 2px; }
.second { height: 52px; }
.second .eye { width: 28px; height: 28px; margin: 4px 7px 0 13px; }
.selected { width: 184px; height: 36px; display: flex; background: #b2d6fe; }
.selected svg { width: 34px; height: 36px; overflow: visible; margin-right: 10px; }
.selected span { padding-top: 0; }
.tabs { display: flex; }
.tab { background: #fff; }
.tab.on { background: linear-gradient(#6ab3f9, #147dff); color: #fff; }
.dock-tabs { height: 42px; flex: none; display: flex; align-items: flex-end; }
.dock-tabs .frame { width: 174px; height: 22px; background: #e1e1e1; border-top: 2px solid #d0d0d0; border-top-left-radius: 8px; }
.dock-tabs .right { border-radius: 0 8px 0 0; }
.dock-tabs .tabs { margin: 0 5px 2px 4px; height: 40px; }
.dock-tabs .tab { width: 163px; padding-right: 3px; line-height: 38px; text-align: center; border-radius: 8px 0 0 8px; border-bottom: 2px solid #0a64f0; }
.dock-tabs .tab + .tab { width: 174px; padding: 0 0 0 5px; border-radius: 0 8px 8px 0; border: solid #b8b8b8; border-width: 0 2px 2px 0; }

.push { height: 42px; flex: none; display: flex; align-items: center; padding: 0 0 8px 16px; background: #fff; border: 1px solid #c4c4c4; border-bottom: 2px solid #a8a8a8; border-radius: 8px; line-height: 30px; }
.push svg { width: 30px; height: 30px; margin: 8px 15px 0 0; }
.push.off { background: #f3f3f3; color: #8a8a8a; border-color: #d0d0d0; }
.push.off svg { opacity: .5; }
.push.primary { background: linear-gradient(#4a94f8, #1060e0); border-color: #2070f0; border-bottom-color: #0848c8; }
.actions { height: 74px; flex: none; display: flex; padding: 31px 0 0 36px; }
.apply { width: 165px; margin-right: 6px; }
.push.off.apply svg { opacity: .45; filter: saturate(.5); }
.reset { width: 166px; margin-right: 5px; padding-left: 17px; }
.reset svg { margin-right: 13px; }
.delete { width: 175px; margin-right: 6px; padding-left: 20px; }
.delete svg { width: 27px; margin-right: 13px; }
.about { width: 98px; padding-left: 33px; }
.search-row { margin-top: 41px; height: 52px; flex: none; display: flex; padding-left: 24px; align-items: flex-start; }
.search { width: 590px; height: 42px; margin: 4px 4px 0 0; background: #fff; border: 2px solid #b8b8b8; padding-left: 4px; line-height: 34px; color: #808080; }
.gear { width: 52px; height: 51px; border: 2px solid #b0b0b0; background: linear-gradient(#e4e4e4, #f6f6f6); display: flex; align-items: center; justify-content: center; }
.gear svg { width: 34px; height: 34px; }
.scroll { margin: 20px 0 0 24px; width: 645px; height: 372px; flex: none; display: flex; overflow: hidden; }
.props { width: 616px; margin-top: -29px; flex: none; }
.props .combo { margin-top: 0; }
.props .rep2 { width: 420px; margin-left: 190px; padding-left: 14px; }
.props h3 { margin: 0; height: 33px; font: bold 25.6px/33px "Liberation Sans", sans-serif; border-bottom: 2px solid #b8b8b8; box-shadow: 0 2px #fff; }
.props h3.first { margin-top: 16px; }
.row { display: flex; }
.combos { margin: 16px 0 0 17px; gap: 7px; }
.props .component { width: 256px; background: #f3f3f3; }
.color-buttons { margin: 14px 0 0 12px; }
.color-buttons svg { width: 34px; margin-right: 11px; }
.show { width: 192px; margin-right: 8px; padding-left: 38px; }
.edit { width: 189px; margin-right: 9px; padding-left: 48px; }
.rescale { width: 194px; padding-left: 26px; }
.props h3.styling { margin-top: 25px; }
.props h3.lighting { margin-top: 19px; }
.field { display: flex; padding-top: 7px; align-items: flex-start; }
.field label { width: 186px; padding-top: 1px; }
.slider { width: 159px; height: 6px; margin: 29px 25px 0 0; border-radius: 3px; background: #b8b8b8; }
.slider i { width: 33px; height: 33px; margin: -12px 0 0 122px; border-radius: 50%; background: #fff; border: 1px solid #b4b4b4; border-bottom-width: 2px; }
.slider.zero i { margin-left: 4px; }
.input { width: 246px; height: 42px; margin-top: 11px; background: #fff; border: 2px solid #b4b4b4; padding-left: 4px; line-height: 34px; }
.scrollbar { width: 27px; margin-left: 2px; background: #fafafa; border-left: 1px solid #e4e4e4; padding: 82px 0 0 6px; }
.scrollbar i { width: 15px; height: 100px; border-radius: 8px; background: #c1c1c1; }

.views { flex: 1; display: flex; flex-direction: column; padding: 0 7px 6px 6px; background: linear-gradient(#ebebeb 20px, #cfcfcf 20px 22px, #e1e1e1 22px); }
.layout-tabs { height: 52px; flex: none; padding-left: 772px; }
.layout-tabs .tab { height: 40px; display: flex; align-items: center; padding-bottom: 3px; }
.layout-tabs .on { width: 244px; padding-left: 19px; border-radius: 0 0 0 8px; }
.layout-tabs .win { width: 20px; height: 19px; margin: 5px 16px 0 0; }
.layout-tabs .close { width: 28px; height: 28px; margin: 5px 0 0 19px; }
.layout-tabs .plus { width: 60px; padding: 1px 0 0 4px; justify-content: center; border-radius: 0 0 8px 0; border: solid #b8b8b8; border-width: 0 2px 2px 0; }
.view-head { height: 46px; flex: none; display: flex; justify-content: space-between; align-items: flex-start; }
.view-tools { width: 616px; height: 44px; display: flex; align-items: center; padding-left: 10px; gap: 20px; border-top: 2px solid #fff; border-bottom: 2px solid #b0b0b0; background: linear-gradient(#eee, #c8c8c8); }
.view-tools svg { width: 24px; height: 24px; }
.view-tools span { width: 24px; font: 19px/24px "Liberation Sans", sans-serif; -webkit-text-stroke: .4px #333; color: #333; }
.dim { opacity: .45; }
.faint { opacity: .65; }
.dash { fill: none; stroke: #606050; stroke-width: 1.8; stroke-dasharray: 2 2; }
.poly { fill: none; stroke: #2c5c2c; stroke-width: 1.8; stroke-dasharray: 3 1; }
.view-right { display: flex; gap: 2px; }
.view-name { height: 32px; padding-left: 1px; width: 164px; margin-right: 20px; font-weight: bold; line-height: 38px; border-bottom: 2px solid #000; }
.view-right button { width: 44px; height: 44px; border: 2px solid #ababab; background: linear-gradient(#e2e2e2, #f8f8f8); display: flex; align-items: center; justify-content: center; }
.view-right svg { width: 18px; height: 18px; margin-right: 1px; }
.view-right svg.round { width: 22px; height: 22px; opacity: .9; }
.viewport { height: 984px; flex: none; border: 4px solid #0a24ff; padding: 2px; background: #e4e4e4; }
.scene { width: 1840px; height: 972px; background: #52566c; }
.legend text { font: 27px Lato, "Liberation Sans", sans-serif; fill: #fff; }
.ticks path { stroke: #ccc; stroke-width: 2; }

.status { flex: 1; display: flex; align-items: flex-start; }
.status span { width: 1250px; padding: 10px 0 0 12px; letter-spacing: -.03px; }
.cancel { width: 44px; height: 44px; margin-top: 6px; border: 2px solid #c4c4c4; background: #e8e8e8; display: flex; align-items: center; justify-content: center; }
.cancel svg { width: 20px; height: 20px; opacity: .5; }
.progress { width: 1190px; height: 12px; margin: 22px 0 0 2px; border: 2px solid #bcbcbc; border-radius: 6px; background: #dadada; }
.resize { width: 22px; height: 22px; margin: 31px 0 0 51px; }
```
FILE: mesh.js
```js
// Triangular simulation mesh: node positions, Delaunay edges and the filling-factor front.
const NS = 'http://www.w3.org/2000/svg';
const root = document.getElementById('mesh');
const TOP = 63, BOTTOM = 1269, LEFT = 327, RIGHT = 2739, AXIS = 666;

function path(parent, d, attrs) {
  const p = document.createElementNS(NS, 'path');
  p.setAttribute('d', d);
  for (const k in attrs) p.setAttribute(k, attrs[k]);
  parent.appendChild(p);
}

// Nodes of the filled half, mirrored on the symmetry axis.
const mirrored = [
  [381,120],[462,120],[540,120],[618,120],[381,186],[441,178],[522,175],[594,172],[673,185],
  [381,252],[441,243],[495,231],[576,236],[651,234],[727,246],[381,316],[441,304],[495,294],[552,288],[630,294],[705,305],[780,312],
  [816,360],[783,405],[838,447],[363,350],[363,398],[363,437],[363,475],[363,515],[405,340],[405,402],[405,438],[405,475],[405,510],
  [459,384],[450,434],[447,470],[450,505],[480,342],[534,330],[588,340],[666,342],[720,350],
  [507,418],[495,462],[495,500],[480,538],[540,375],[576,385],[618,385],[672,395],
  [552,420],[600,430],[648,435],[725,440],[540,465],[580,475],[620,478],[685,478],[795,487],
  [530,515],[570,520],[610,520],[656,523],[748,523],[527,562],[575,573],[627,573],[727,573],[825,573],[861,536],
  [425,545],[381,578],[381,636],[441,606],[501,636],[487,590],[543,612],[609,620],[705,620],[810,620],[879,620]
];
const centre = [[441,666],[561,666],[660,666],[756,666],[864,664]];
const single = [
  [696,128],[798,127],[898,127],[1000,128],[1105,138],[1246,138],[1386,138],[1525,138],[1641,153],[1783,153],[1919,156],[2065,152],[2152,180],[2236,156],[2376,156],[2514,156],[2656,153],
  [753,190],[852,190],[951,190],[1055,203],[1159,214],[1297,214],[1441,217],[1554,229],[1668,243],[1813,240],[1950,244],[2043,270],[2133,291],[2215,272],[2297,253],[2436,247],[2575,247],[2656,303],
  [804,256],[906,256],[1009,268],[1111,277],[1213,291],[1353,288],[1470,303],[1583,318],[1699,333],[1840,330],[1927,357],[2022,382],[2113,411],[2193,385],[2273,362],[2354,340],[2494,340],[2577,395],
  [858,318],[961,330],[1063,343],[1164,354],[1273,366],[1383,382],[1497,396],[1613,408],[1729,424],[1819,450],[1910,480],[2002,498],[2092,522],[2171,500],[2253,482],[2335,457],[2415,432],[2496,492],[2656,457],
  [884,405],[985,420],[1087,433],[1188,444],[1303,438],[1415,454],[1534,467],[1647,486],[1748,529],[1840,555],[1928,582],[2022,604],[2150,600],[2233,580],[2314,557],[2395,535],[2474,594],[2575,549],
  [903,492],[1008,507],[1112,516],[1222,513],[1335,513],[1452,526],[1570,540],[1668,588],[1767,636],[1859,663],[1950,684],[2085,687],[2210,680],[2292,660],[2372,636],[2455,693],[2554,648],[2656,606],
  [930,576],[1032,591],[1146,585],[1261,585],[1374,591],[1488,600],[1588,648],[1686,694],[1785,744],[1877,768],[2007,765],[2138,765],[2269,760],[2351,738],[2433,795],[2533,748],[2637,708],
  [950,664],[1067,664],[1183,660],[1300,657],[1410,655],[1503,706],[1606,750],[1705,802],[1804,850],[1938,850],[2070,846],[2198,843],[2328,837],[2431,945],[2533,900],[2637,858],
  [927,754],[1039,738],[1149,735],[1264,732],[1383,732],[1477,780],[1573,828],[1672,876],[1758,958],[1898,957],[2028,952],[2160,949],[2290,945],[2637,1008],
  [908,837],[1014,828],[1117,810],[1231,808],[1347,801],[1447,853],[1546,903],[1627,985],[1710,1060],[1847,1059],[1993,1059],[2120,1057],[2250,1052],[2395,1053],[2532,1053],
  [884,925],[990,912],[1095,898],[1200,882],[1317,880],[1412,931],[1494,1008],[1578,1086],[1658,1165],[1801,1165],[1938,1165],[2083,1166],[2214,1163],[2352,1162],[2496,1164],[2637,1161],
  [858,1011],[965,998],[1068,987],[1176,970],[1280,957],[1365,1033],[1447,1110],[1531,1192],
  [804,1078],[906,1078],[1013,1063],[1117,1048],[1225,1033],[1165,1112],[1306,1112],[1393,1191],
  [753,1141],[853,1141],[955,1138],[1060,1127],[696,1206],[798,1205],[899,1205],[1003,1203],[1105,1192],[1248,1192]
];
const topX = [327,402,480,558,642,742,842,943,1045,1186,1330,1468,1611,1752,1893,2034,2174,2314,2455,2596,2739];
const leftY = [122,195,268,330,371,411,450,492,545,606];
const rightY = [215,365,516,666,817,967,1117];

const pts = [...single, ...centre];
mirrored.forEach(([x, y]) => pts.push([x, y], [x, 2 * AXIS - y]));
topX.forEach(x => pts.push([x, TOP], [x, BOTTOM]));
leftY.forEach(y => pts.push([LEFT, y], [LEFT, 2 * AXIS - y]));
pts.push([LEFT, AXIS]);
rightY.forEach(y => pts.push([RIGHT, y]));

// Bowyer-Watson triangulation.
function triangulate(input) {
  const p = input.map(([x, y], i) => [x + Math.sin(i * 12.9) * 0.01, y + Math.cos(i * 7.7) * 0.01]);
  const n = p.length;
  p.push([-60000, -50000], [60000, -50000], [1500, 90000]);
  const make = (a, b, c) => {
    const [ax, ay] = p[a], [bx, by] = p[b], [cx, cy] = p[c];
    const d = 2 * (ax * (by - cy) + bx * (cy - ay) + cx * (ay - by));
    const A = ax * ax + ay * ay, B = bx * bx + by * by, C = cx * cx + cy * cy;
    const x = (A * (by - cy) + B * (cy - ay) + C * (ay - by)) / d;
    const y = (A * (cx - bx) + B * (ax - cx) + C * (bx - ax)) / d;
    return { v: [a, b, c], x, y, r: (ax - x) ** 2 + (ay - y) ** 2 };
  };
  let tris = [make(n, n + 1, n + 2)];
  for (let i = 0; i < n; i++) {
    const edges = new Map();
    tris = tris.filter(t => {
      if ((p[i][0] - t.x) ** 2 + (p[i][1] - t.y) ** 2 >= t.r) return true;
      for (let k = 0; k < 3; k++) {
        const a = t.v[k], b = t.v[(k + 1) % 3];
        const key = Math.min(a, b) + '_' + Math.max(a, b);
        edges.set(key, edges.has(key) ? null : [a, b]);
      }
      return false;
    });
    edges.forEach(e => { if (e) tris.push(make(e[0], e[1], i)); });
  }
  return tris.filter(t => t.v.every(v => v < n)).map(t => t.v);
}

// Surface colours.
const clip = document.createElementNS(NS, 'clipPath');
clip.id = 'domain';
path(clip, `M${LEFT} ${TOP}H${RIGHT}V${BOTTOM}H${LEFT}Z`, {});
root.appendChild(clip);
const surface = document.createElementNS(NS, 'g');
surface.setAttribute('clip-path', 'url(#domain)');
root.appendChild(surface);
path(surface, `M${LEFT} ${TOP}H${RIGHT}V${BOTTOM}H${LEFT}Z`, { fill: '#2d3a8e' });
path(root, 'M82 543H328V789H82Z', { fill: '#8c0018' });

const full = [[327,122],[385,118],[440,165],[522,172],[585,222],[652,236],[708,305],[745,350],[778,405],[797,487],[818,560],[822,580],[806,618],[864,664]];
const empty = [[327,42],[410,42],[500,40],[575,68],[640,115],[715,155],[757,200],[812,258],[866,325],[890,410],[910,490],[930,575],[940,620],[950,664]];
const ramp = [[0,0x8c,0,0x18],[.05,0x8c,0x10,0x80],[.11,0x34,0x38,0x98],[.2,0x48,0x94,0x90],[.3,0x6a,0xa0,0x6a],[.42,0xa8,0xa0,0x84],[.52,0xae,0xa4,0xa0],[.6,0xa4,0xa0,0x7c],[.7,0x64,0x9c,0x68],[.84,0x46,0x94,0x94],[1,0x2d,0x3a,0x8e]];
function shade(t) {
  let i = 1;
  while (i < ramp.length - 1 && ramp[i][0] < t) i++;
  const a = ramp[i - 1], b = ramp[i], f = (t - a[0]) / (b[0] - a[0]);
  return `rgb(${[1, 2, 3].map(k => Math.round(a[k] + (b[k] - a[k]) * f)).join()})`;
}
for (let s = 40; s >= 0; s--) {
  const t = s / 40;
  const half = full.map(([x, y], i) => [x + (empty[i][0] - x) * t, y + (empty[i][1] - y) * t]);
  const loop = half.concat(half.slice().reverse().map(([x, y]) => [x, 2 * AXIS - y]));
  path(surface, 'M' + loop.map(q => q.map(v => v.toFixed(1)).join(' ')).join('L') + 'Z', { fill: shade(t) });
}

// Mesh edges.
let d = '';
const seen = new Set();
triangulate(pts).forEach(v => {
  for (let k = 0; k < 3; k++) {
    const a = Math.min(v[k], v[(k + 1) % 3]), b = Math.max(v[k], v[(k + 1) % 3]);
    if (seen.has(a + '_' + b)) continue;
    seen.add(a + '_' + b);
    d += `M${pts[a].join(' ')}L${pts[b].join(' ')}`;
  }
});
d += `M${LEFT} ${TOP}H${RIGHT}V${BOTTOM}H${LEFT}Z`;

// Inlet block: nested squares joined by zigzags.
const cx = 204.5, cy = 666;
const ring = k => {
  const n = 4 - k, h = n * 30.7, out = [];
  for (let s = 0; s < 4; s++) for (let j = 0; j < n; j++) {
    const u = -h + j * 61.4;
    out.push([[u, -h], [h, u], [-u, h], [-h, -u]][s]);
  }
  return out;
};
for (let k = 0; k < 4; k++) {
  const h = (4 - k) * 30.7;
  d += `M${cx - h} ${cy - h}h${2 * h}v${2 * h}h${-2 * h}z`;
  const inner = k < 3 ? ring(k + 1) : [[0, 0]];
  ring(k).forEach(([x, y]) => inner.forEach(([u, v]) => {
    if (Math.hypot(x - u, y - v) < 46) d += `M${cx + x} ${cy + y}L${cx + u} ${cy + v}`;
  }));
}
path(root, d, { fill: 'none', stroke: '#00087f', 'stroke-width': 5.5, 'shape-rendering': 'crispEdges' });

// Legend ticks.
let ticks = '';
for (let i = 0; i <= 20; i++) {
  const y = i === 20 ? 915 : 557 + i * 18;
  ticks += `M${i % 5 || i === 0 || i === 20 ? 1580 : 1576} ${y}H1592`;
}
path(document.getElementById('ticks'), ticks, {});
```
